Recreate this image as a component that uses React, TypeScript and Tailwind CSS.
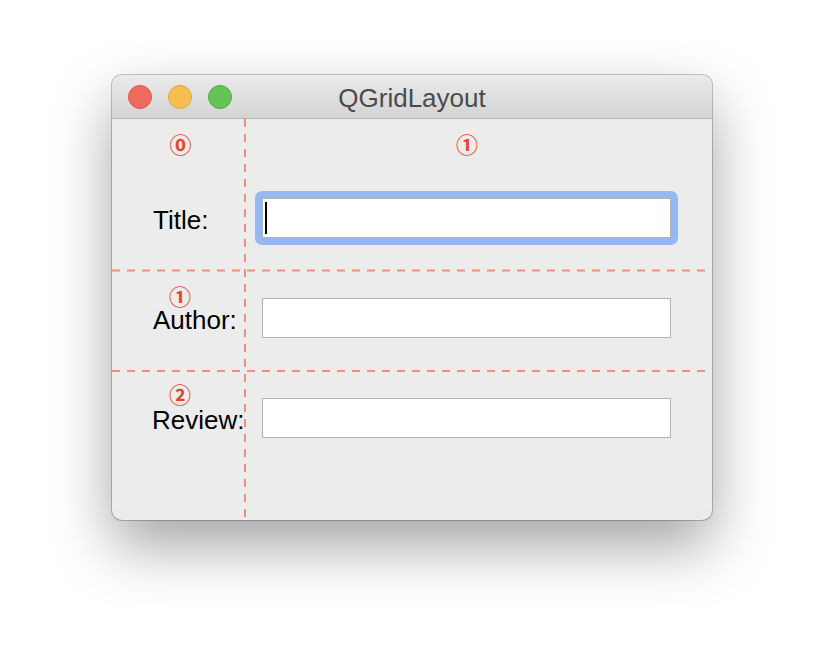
const labelFont = { fontFamily: '"Liberation Sans", Arial, sans-serif' };
const markFont = { fontFamily: '"Noto Sans CJK SC", "DejaVu Sans", sans-serif' };

function Mark({ children }: { children: string }) {
	return (
		<span className="text-[22px] leading-[20px] font-semibold text-[#e8452c]" style={markFont}>
			{children}
		</span>
	);
}

function Field({ caret }: { caret?: boolean }) {
	return (
		<div className="w-[409px] h-[40px] bg-white border border-[#b4b4b4] flex items-center">
			{caret && <div className="ml-[2px] w-[2px] h-[32px] bg-black" />}
		</div>
	);
}

function TrafficLights() {
	return (
		<div className="flex gap-[16px] pl-[16px]">
			<div className="w-[24px] h-[24px] rounded-full bg-[#ee6a5f] border border-[#d8564b]" />
			<div className="w-[24px] h-[24px] rounded-full bg-[#f5bf4f] border border-[#dba646]" />
			<div className="w-[24px] h-[24px] rounded-full bg-[#61c454] border border-[#52aa43]" />
		</div>
	);
}

export default function App() {
	return (
		<div className="w-[824px] h-[668px] bg-white pt-[75px] pl-[112px]" style={labelFont}>
			<div className="w-[600px] h-[445px] rounded-[10px] overflow-hidden bg-[#ececec] shadow-[0_0_0_1px_rgba(0,0,0,0.22),0_26px_60px_rgba(0,0,0,0.36)]">
				{/* title bar */}
				<div className="relative h-[44px] flex items-center bg-gradient-to-b from-[#ebebeb] to-[#d3d3d3] border-b border-[#b8b8b8]">
					<TrafficLights />
					<div className="absolute inset-0 pt-[4px] flex items-center justify-center text-[26px] text-[#4b4b4b]">
						QGridLayout
					</div>
				</div>

				{/* content */}
				<div className="relative h-[400px]">
					{/* row 0 */}
					<div className="h-[151px] flex flex-col">
						<div className="h-[54px] flex items-center">
							<div className="w-[137px] text-center">
								<Mark>⓪</Mark>
							</div>
							<div className="ml-[207px]">
								<Mark>①</Mark>
							</div>
						</div>
						<div className="mt-[18px] flex items-center">
							<div className="w-[143px] pl-[41px] pt-[4px] text-[26px] leading-[26px] text-black">Title:</div>
							<div className="p-[7px] rounded-[7px] bg-[#93b9ee]">
								<Field caret />
							</div>
						</div>
					</div>

					{/* row 1 */}
					<div className="h-[101px] flex">
						<div className="w-[150px] pt-[15px] flex flex-col">
							<div className="w-[136px] h-[20px] leading-[20px] text-center">
								<Mark>①</Mark>
							</div>
							<div className="pl-[41px] pt-[2px] text-[26px] leading-[26px] text-black">Author:</div>
						</div>
						<div className="pt-[28px]">
							<Field />
						</div>
					</div>

					{/* row 2 */}
					<div className="flex">
						<div className="w-[150px] pt-[12px] flex flex-col">
							<div className="w-[136px] h-[20px] leading-[20px] text-center">
								<Mark>②</Mark>
							</div>
							<div className="pl-[40px] pt-[4px] text-[26px] leading-[26px] text-black">Review:</div>
						</div>
						<div className="pt-[27px]">
							<Field />
						</div>
					</div>

					{/* grid guides */}
					<svg className="absolute inset-0 pointer-events-none" width="600" height="400">
						<line x1="133" y1="0" x2="133" y2="400" stroke="#ee907c" strokeWidth="2" strokeDasharray="8 7" />
						<line x1="0" y1="151.5" x2="595" y2="151.5" stroke="#ee907c" strokeWidth="2" strokeDasharray="8 7" />
						<line x1="0" y1="252" x2="595" y2="252" stroke="#ee907c" strokeWidth="2" strokeDasharray="8 7" />
					</svg>
				</div>
			</div>
		</div>
	);
}
